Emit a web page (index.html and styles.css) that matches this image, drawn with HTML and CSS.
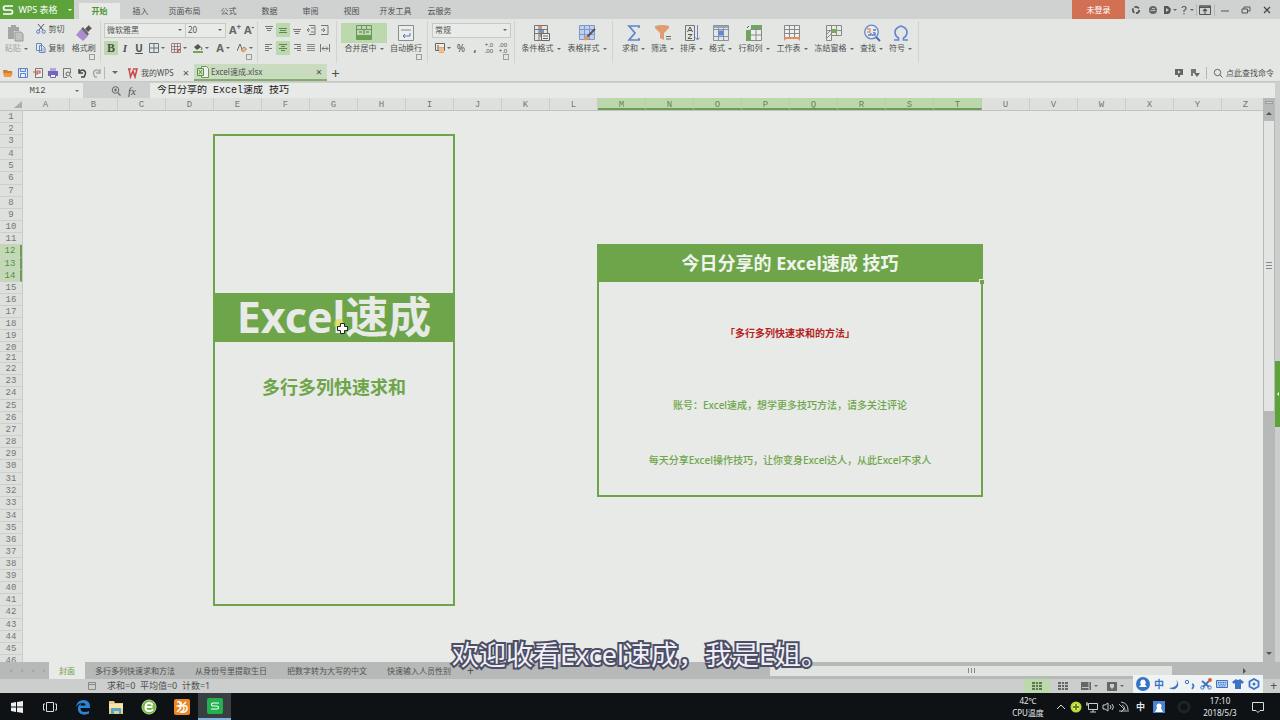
FILE: index.html
```html
<!DOCTYPE html>
<html lang="zh-CN">
<head>
<meta charset="utf-8">
<title>Excel速成.xlsx - WPS 表格</title>
<link rel="stylesheet" href="styles.css">
</head>
<body>
<header class="titlebar">
  <button class="brand"><svg class="i12" viewBox="0 0 12 12"><path d="M11 2H3.5Q1.5 2 1.5 4T3.500 6H8.500Q10.500 6 10.500 8T8.500 10H1" fill="none" stroke="#fff" stroke-width="1.700"/></svg><span>WPS 表格</span><i class="caret light"></i></button>
  <nav class="menus">
    <button class="menu active">开始</button><button class="menu">插入</button><button class="menu wide">页面布局</button><button class="menu">公式</button><button class="menu">数据</button><button class="menu">审阅</button><button class="menu">视图</button><button class="menu wide">开发工具</button><button class="menu">云服务</button>
  </nav>
  <button class="login">未登录</button>
  <div class="win">
    <button aria-label="皮肤"><svg class="i10" viewBox="0 0 10 10"><circle cx="5" cy="5" r="3.200" fill="none" stroke="#555" stroke-width="1.800" stroke-dasharray="5 1.500"/></svg></button>
    <button aria-label="云"><svg class="i10" viewBox="0 0 10 10"><circle cx="5" cy="5" r="4" fill="#666"/><path d="M2.500 5.500h5M4 3.500h3" stroke="#bbb"/></svg></button>
    <button aria-label="文档"><svg class="i10" viewBox="0 0 10 10"><path d="M2 1h4l3 3-1 4-2 1H2z" fill="#555"/><path d="M4 3v4l3-2z" fill="#ccc"/></svg><i class="caret"></i></button>
    <button aria-label="帮助"><svg class="i10" viewBox="0 0 10 10"><path d="M3 3Q3 1.500 5 1.500T7 3.500Q7 4.500 5 5.500V7M5 8v1.300" fill="none" stroke="#555" stroke-width="1.200"/></svg><i class="caret"></i></button>
    <i class="vr"></i>
    <button aria-label="功能区"><svg class="i12" viewBox="0 0 12 12"><path d="M.5 2h11v8.500H.5z" fill="none" stroke="#555"/><path d="M1 2h10v1.500H1zM6 10V5M4 7l2-2 2 2" fill="none" stroke="#555" stroke-width="1.200"/></svg></button>
    <i class="vr"></i>
    <button class="ctl" aria-label="最小化"><svg class="i10" viewBox="0 0 10 10"><path d="M1 6h8" stroke="#555"/></svg></button>
    <button class="ctl" aria-label="还原"><svg class="i10" viewBox="0 0 10 10"><path d="M1 4h5.500v4H1zM3 4V2h6v4H6.500" fill="none" stroke="#555"/></svg></button>
    <button class="ctl" aria-label="关闭"><svg class="i10" viewBox="0 0 10 10"><path d="M2 2l6 6M8 2L2 8" stroke="#444" stroke-width="1.200"/></svg></button>
  </div>
</header>

<section class="ribbon">
  <div class="group clip more-opts">
    <button class="big off"><svg class="i18" viewBox="0 0 18 18"><path d="M1 3h3V1h5v2h3v4H7v8H1z" fill="#a3a6a4"/><path d="M8 8h6l2 2v7H8z" fill="#bfc2c0" stroke="#999"/></svg><span>粘贴<i class="caret"></i></span></button>
    <div class="pair">
      <button class="line"><svg class="i10" viewBox="0 0 10 10"><path d="M2 0l5 6M8 0L3 6" stroke="#555"/><circle cx="2.200" cy="7.700" r="1.600" fill="none" stroke="#5a78c8"/><circle cx="7.700" cy="7.700" r="1.600" fill="none" stroke="#5a78c8"/></svg><span>剪切</span></button>
      <button class="line"><svg class="i10" viewBox="0 0 10 10"><path d="M.5.5h5v7h-5zM3.500 2.500h3l2.500 2.500v4.500H3.500z" fill="#e6e9f0" stroke="#6d86b8"/><path d="M5 6h3M5 8h3" stroke="#6d86b8" stroke-width=".7"/></svg><span>复制</span></button>
    </div>
    <button class="big"><svg class="i18" viewBox="0 0 18 18"><path d="M10 5l4-4 1 2 2 1-4 4z" fill="#555"/><path d="M8 3l6 7-2 2-6-7z" fill="#666"/><path d="M6 5l7 7-5 5-7-6z" fill="#ab8cd0"/></svg><span>格式刷</span></button>
  </div>
  <div class="group font more-opts">
    <div class="row top">
      <label class="sel name"><select aria-label="字体"><option>微软雅黑</option></select><i class="caret"></i></label><label class="sel size"><select aria-label="字号"><option>20</option></select><i class="caret"></i></label>
      <button class="tool letter" aria-label="增大字号">A<sup>+</sup></button><button class="tool letter" aria-label="减小字号">A<sup>-</sup></button>
    </div>
    <div class="row">
      <button class="tool on bold">B</button><button class="tool ital">I</button><button class="tool under">U</button>
      <button class="tool drop" aria-label="边框"><svg class="i10" viewBox="0 0 10 10"><path d="M.5.5h9v9h-9zM5 .5v9M.5 5h9" fill="none" stroke="#667086"/></svg><i class="caret"></i></button>
      <button class="tool drop" aria-label="绘制边框"><svg class="i10" viewBox="0 0 10 10"><path d="M.5.5h9v9h-9zM3.500.5v9M6.500.5v9M.5 3.500h9M.5 6.500h9" fill="none" stroke="#8a6f6a" stroke-width=".8"/><path d="M6 9l3-3" stroke="#b55" stroke-width="1.500"/></svg><i class="caret"></i></button>
      <button class="tool drop" aria-label="填充颜色"><svg class="i10" viewBox="0 0 10 10"><path d="M1 4l4-3 3 3-4 3z" fill="#555"/><path d="M8 4q2 2 0 3" fill="none" stroke="#555"/><path d="M0 8h10v2H0z" fill="#70a84b"/></svg><i class="caret"></i></button>
      <button class="tool drop letter">A<i class="caret"></i></button>
      <button class="tool drop" aria-label="清除"><svg class="i10" viewBox="0 0 10 10"><path d="M0 8l3-7 2 5" fill="none" stroke="#666"/><path d="M4 7l3-3 2.500 2-3 3z" fill="#efb98c" stroke="#b98055"/></svg><i class="caret"></i></button>
    </div>
  </div>
  <div class="group align">
    <div class="row top"><button class="tool" aria-label="顶端对齐"><svg class="i10" viewBox="0 0 10 10"><path d="M1 1.500h8M2 3.500h6M3 5.500h4" stroke="#777"/></svg></button><button class="tool on" aria-label="垂直居中"><svg class="i10" viewBox="0 0 10 10"><path d="M1 3.500h8M2 5.500h6M1 7.500h8" stroke="#66805c"/></svg></button><button class="tool" aria-label="底端对齐"><svg class="i10" viewBox="0 0 10 10"><path d="M1 4.500h8M2 6.500h6M3 8.500h4" stroke="#777"/></svg></button><button class="tool" aria-label="减少缩进"><svg class="i10" viewBox="0 0 10 10"><path d="M3 .5h6v9H3M4 5H1M3 3L1 5l2 2M5 3h3M5 7h3" fill="none" stroke="#777"/></svg></button><button class="tool" aria-label="增加缩进"><svg class="i10" viewBox="0 0 10 10"><path d="M1 .5h7v9H1M1 5h4M3 3l2 2-2 2" fill="none" stroke="#777"/></svg></button></div>
    <div class="row"><button class="tool" aria-label="左对齐"><svg class="i10" viewBox="0 0 10 10"><path d="M1 1.500h7M1 3.500h4M1 5.500h7M1 7.500h4" stroke="#777"/></svg></button><button class="tool on" aria-label="居中"><svg class="i10" viewBox="0 0 10 10"><path d="M1 1.500h8M3 3.500h4M1 5.500h8M3 7.500h4" stroke="#66805c"/></svg></button><button class="tool" aria-label="右对齐"><svg class="i10" viewBox="0 0 10 10"><path d="M2 1.500h7M5 3.500h4M2 5.500h7M5 7.500h4" stroke="#777"/></svg></button><button class="tool" aria-label="两端对齐"><svg class="i10" viewBox="0 0 10 10"><path d="M1 1.500h8M1 3.500h8M1 5.500h8M1 7.500h8" stroke="#888"/></svg></button><button class="tool" aria-label="分散对齐"><svg class="i10" viewBox="0 0 10 10"><path d="M.5 1v8M9.500 1v8M2 5.500h6M4 3.500L2 5.500l2 2M6 3.500l2 2-2 2" fill="none" stroke="#777"/></svg></button></div>
  </div>
  <div class="group merge more-opts">
    <button class="big w4 lit"><svg class="i18" viewBox="0 0 18 18"><path d="M1.500 1.500h15v14h-15zM1.500 5.500h15M6.500 1.500v4M11.500 1.500v4" fill="none" stroke="#71906a"/><path d="M1.500 11h15v5h-15z" fill="#6a9f53"/><path d="M4 8h3M14 8h-3M9 6v4" stroke="#55774b"/></svg><span>合并居中<i class="caret"></i></span></button>
    <button class="big w3"><svg class="i18" viewBox="0 0 18 18"><path d="M1.500 1.500h15v15h-15z" fill="#eceeed" stroke="#8a8d8b"/><path d="M4 6h10" stroke="#888"/><path d="M13 9v3H6M8 10l-2 2 2 2" fill="none" stroke="#5877bd"/></svg><span>自动换行</span></button>
  </div>
  <div class="group num more-opts">
    <div class="row top"><label class="sel fmt"><select aria-label="数字格式"><option>常规</option></select><i class="caret"></i></label></div>
    <div class="row"><button class="tool drop" aria-label="货币"><svg class="i10" viewBox="0 0 10 10"><path d="M.5.5h9v7h-9z" fill="#eee" stroke="#666"/><path d="M3 2v5" stroke="#555"/><path d="M4 4h5v6H4z" fill="#e9a65f"/><path d="M4 6h5M4 8h5" stroke="#fff" stroke-width=".6"/></svg><i class="caret"></i></button><button class="tool">%</button><button class="tool comma">,</button><button class="tool dec"><span>+.0</span><span>.00</span></button><button class="tool dec"><span>.00</span><span>+.0</span></button></div>
  </div>
  <div class="group styles">
    <button class="big w4"><svg class="i18" viewBox="0 0 18 18"><path d="M2.500 1.500h13v15h-13zM2.500 5.500h13M2.500 9.500h13M7 1.500v15" fill="none" stroke="#777"/><path d="M7 2h3v3H7zM7 10h3v3H7z" fill="#d98d6b"/><path d="M7 6h5v3H7z" fill="#7a93c9"/><path d="M9.500 9.500h8v7h-8z" fill="#eee" stroke="#666"/><path d="M11 12h5M11 14.500h5" stroke="#666"/></svg><span>条件格式<i class="caret"></i></span></button>
    <button class="big w4"><svg class="i18" viewBox="0 0 18 18"><path d="M1.500 1.500h15v14h-15z" fill="#c1d0ed" stroke="#7e97cf"/><path d="M1.500 5.500h15M1.500 10.500h15M6.500 1.500v14M11.500 1.500v14" stroke="#7e97cf"/><path d="M9 13l8-8" stroke="#555" stroke-width="2"/><path d="M6 16q0-4 3-4l2 2q-1 3-5 2" fill="#e29a5b"/></svg><span>表格样式<i class="caret"></i></span></button>
  </div>
  <div class="group edit">
    <button class="big w2"><svg class="i18" viewBox="0 0 18 18"><path d="M14 4V2H4l6 7-6 7h10v-2" fill="none" stroke="#5f84cc" stroke-width="1.700"/></svg><span>求和<i class="caret"></i></span></button>
    <button class="big w2"><svg class="i18" viewBox="0 0 18 18"><path d="M1 2q7-2 14 0v2l-5 5v7l-4-2V9L1 4z" fill="#df9c70"/><path d="M12 12.500h5M12 15h5" stroke="#666"/></svg><span>筛选<i class="caret"></i></span></button>
    <button class="big w2"><svg class="i18" viewBox="0 0 18 18"><path d="M2.500 1.500h9v15h-9z" fill="none" stroke="#777"/><path d="M4.500 8L7 3l2.500 5M5.500 6.500h3M5 10.500h4l-4 4h4" fill="none" stroke="#555"/><path d="M14.500 1v15M12.500 13.500l2 2.500 2-2.500" fill="none" stroke="#6c86c9"/></svg><span>排序<i class="caret"></i></span></button>
    <button class="big w2"><svg class="i18" viewBox="0 0 18 18"><path d="M1.500 1.500h15v15h-15zM1.500 5.500h15M1.500 12.500h15M6.500 1.500v15M11.500 1.500v15" fill="none" stroke="#8991a2"/><path d="M2 2h14v2H2z" fill="#9ba2b0"/><path d="M6.500 6.500h5v5h-5z" fill="#5f86dc"/></svg><span>格式<i class="caret"></i></span></button>
    <button class="big w3"><svg class="i18" viewBox="0 0 18 18"><path d="M5.500 5.500h11v11h-11zM5.500 11h11M11 5.500v11" fill="#eee" stroke="#888"/><path d="M6 1h11v4H6zM1 6h5v11H1z" fill="#70a461"/><path d="M2 4l2-2" stroke="#555"/></svg><span>行和列<i class="caret"></i></span></button>
    <button class="big w3"><svg class="i18" viewBox="0 0 18 18"><path d="M1.500 1.500h15v12h-15zM1.500 5.500h15M1.500 9.500h15M6.500 1.500v12M11.500 1.500v12" fill="#eee" stroke="#888"/><path d="M1 13h16v4l-2-2H3l-2 2z" fill="#dd8f62"/></svg><span>工作表<i class="caret"></i></span></button>
    <button class="big w4"><svg class="i18" viewBox="0 0 18 18"><path d="M1.500 1.500h15v10h-10v5h-5zM1.500 6.500h15M6.500 1.500v10M11.500 1.500v10" fill="#e8eae8" stroke="#888"/><path d="M7 5h5v4H7z" fill="#79a955"/><path d="M2 10l4-4M2 14l4-4" stroke="#888"/></svg><span>冻结窗格<i class="caret"></i></span></button>
    <button class="big w2"><svg class="i18" viewBox="0 0 18 18"><circle cx="8.500" cy="8" r="6.800" fill="#e9ecf0" stroke="#6787c8" stroke-width="1.300"/><path d="M13 13l4 4" stroke="#4c70b8" stroke-width="2"/><path d="M4 5h3v3H4" fill="none" stroke="#dd9459" stroke-width="1.300"/><path d="M5 11h3V9M10 6h3M10 9q3-1 2 2H9" fill="none" stroke="#5879c0" stroke-width="1.300"/></svg><span>查找<i class="caret"></i></span></button>
    <button class="big w2"><svg class="i18" viewBox="0 0 18 18"><path d="M2 16h4.500v-2Q3 12 3 8t6-6q6 2 6 6t-3.500 6v2H16" fill="none" stroke="#6485cf" stroke-width="1.700"/></svg><span>符号<i class="caret"></i></span></button>
  </div>
</section>

<section class="docbar">
  <div class="quick">
    <button aria-label="打开"><svg class="i10" viewBox="0 0 10 10"><path d="M0 2h4l1 1h4v2H2L1 9z" fill="#cf7a2f"/><path d="M2 5h8L8 9H1z" fill="#ee9a45"/></svg></button>
    <button aria-label="保存"><svg class="i10" viewBox="0 0 10 10"><path d="M.5.5h9v9h-9zM2.500.5v3h5v-3M2.500 9.500v-4h5v4" fill="#e8eefa" stroke="#5c83cf"/></svg></button>
    <button aria-label="输出PDF"><svg class="i10" viewBox="0 0 10 10"><path d="M2.500.5h7v9h-7z" fill="#eee" stroke="#777"/><path d="M0 4h3M4 7V3h3v2H4" fill="none" stroke="#c65a50" stroke-width="1.200"/></svg></button>
    <button aria-label="打印"><svg class="i10" viewBox="0 0 10 10"><path d="M2 0h6v3H2z" fill="#b3a6d8"/><path d="M0 3h10v5H0z" fill="#7465b5"/><path d="M2.500 6.500h5v3h-5z" fill="#eee" stroke="#7465b5"/></svg></button>
    <button aria-label="打印预览"><svg class="i10" viewBox="0 0 10 10"><path d="M5 9.500H1.500v-9h7V5" fill="none" stroke="#777"/><circle cx="6" cy="6" r="2" fill="none" stroke="#666"/><path d="M7.500 7.500L10 10" stroke="#666"/></svg></button>
    <button aria-label="撤销"><svg class="i10" viewBox="0 0 10 10"><path d="M2 1v4h4M2 5Q4 1 7 2.500T7 9H4" fill="none" stroke="#444" stroke-width="1.500"/></svg></button>
    <button aria-label="恢复"><svg class="i10" viewBox="0 0 10 10"><path d="M8 1v4H4M8 5Q6 1 3 2.500T3 9h2" fill="none" stroke="#a5a8a6" stroke-width="1.500"/></svg></button>
    <i class="vr"></i>
    <button class="more" aria-label="更多"><i class="caret big-caret"></i></button>
  </div>
  <div class="doc"><svg class="i12" viewBox="0 0 12 12"><path d="M1 2h3M2 2l1.500 8L6 4l2 6 2-8H6" fill="none" stroke="#cd4948" stroke-width="1.500"/></svg><span>我的WPS</span><button class="x" aria-label="关闭标签">×</button></div>
  <div class="doc current"><svg class="i12" viewBox="0 0 12 12"><path d="M4.500.5h5l2 2v9h-7z" fill="#edf3ea" stroke="#6f9460"/><path d="M.5 2.500h6v7h-6zM2 4l3 4M5 4L2 8" fill="#cfe3c5" stroke="#5c8d4b"/></svg><span>Excel速成.xlsx</span><button class="x" aria-label="关闭标签">×</button></div>
  <button class="plus" aria-label="新建">+</button>
  <div class="find">
    <button aria-label="播放"><svg class="i10" viewBox="0 0 10 10"><path d="M1 1h8v6H6v2H4V7H1z" fill="#666"/><path d="M4 2.500v3L6.500 4z" fill="#eee"/></svg></button>
    <button aria-label="切换"><svg class="i10" viewBox="0 0 10 10"><path d="M1 1h5v4H3v3H1z" fill="#777"/><path d="M4 5h6L7 9z" fill="#666"/></svg></button>
    <i class="vr"></i>
    <svg class="i10" viewBox="0 0 10 10"><circle cx="4.500" cy="4.500" r="3.200" fill="none" stroke="#666"/><path d="M7 7l2.500 2.500" stroke="#666"/></svg><span>点此查找命令</span>
  </div>
</section>

<section class="formula">
  <label class="namebox"><input value="M12" aria-label="名称框"><i class="caret"></i></label>
  <div class="fx"><svg class="i10" viewBox="0 0 10 10"><circle cx="4.500" cy="4" r="3.300" fill="none" stroke="#666"/><path d="M3 4h3M4.500 2.500v3M7 7l2.500 2.500" stroke="#666" stroke-width="1.200"/></svg><em>fx</em></div>
  <input class="fbar" value="今日分享的 Excel速成 技巧" aria-label="编辑栏">
</section>

<main class="work">
  <div class="sheet">
    <div class="cols"><button class="corner" aria-label="全选"><svg class="i10" viewBox="0 0 10 10"><path d="M10 2v7H2z" fill="#a9acaa"/></svg></button><span>A</span><span>B</span><span>C</span><span>D</span><span>E</span><span>F</span><span>G</span><span>H</span><span>I</span><span>J</span><span>K</span><span>L</span><span class="s">M</span><span class="s">N</span><span class="s">O</span><span class="s">P</span><span class="s">Q</span><span class="s">R</span><span class="s">S</span><span class="s">T</span><span>U</span><span>V</span><span>W</span><span>X</span><span>Y</span><span>Z</span></div>
    <div class="body">
      <div class="rows"><span>1</span><span>2</span><span>3</span><span>4</span><span>5</span><span>6</span><span>7</span><span>8</span><span>9</span><span>10</span><span>11</span><span class="s">12</span><span class="s">13</span><span class="s">14</span><span>15</span><span>16</span><span>17</span><span>18</span><span>19</span><span>20</span><span>21</span><span>22</span><span>23</span><span>24</span><span>25</span><span>26</span><span>27</span><span>28</span><span>29</span><span>30</span><span>31</span><span>32</span><span>33</span><span>34</span><span>35</span><span>36</span><span>37</span><span>38</span><span>39</span><span>40</span><span>41</span><span>42</span><span>43</span><span>44</span><span>45</span><span>46</span></div>
      <div class="cells">
        <div class="frame cover"></div>
        <h1 class="banner">Excel速成<svg class="cursor" viewBox="0 0 16 16"><circle cx="5" cy="5" r="5" fill="#d7dc2c" opacity=".65"/><path d="M6.500 4.500h4v3h3v4h-3v3h-4v-3h-3v-4h3z" fill="#fff" stroke="#222"/></svg></h1>
        <h2 class="topic">多行多列快速求和</h2>
        <div class="frame card"></div>
        <h2 class="share">今日分享的 Excel速成 技巧<i class="handle"></i></h2>
        <p class="red">「多行多列快速求和的方法」</p>
        <p class="note one">账号：Excel速成，想学更多技巧方法，请多关注评论</p>
        <p class="note two">每天分享Excel操作技巧，让你变身Excel达人，从此Excel不求人</p>
      </div>
    </div>
  </div>
  <div class="vscroll"><div class="split"></div><i class="tri up"></i><div class="thumb"><i></i><i></i><i></i></div><i class="tri down"></i></div>
  <div class="edge"><button class="pull" aria-label="展开任务窗格"></button></div>
</main>

<section class="tabs">
  <div class="navs"><i></i><i></i><i></i><i></i></div>
  <button class="tab active">封面</button><button class="tab">多行多列快速求和方法</button><button class="tab">从身份号里提取生日</button><button class="tab">把数字转为大写的中文</button><button class="tab">快速输入人员性别</button><button class="tab add">+</button>
  <div class="hscroll"><div class="hthumb"><i></i><i></i><i></i></div><i class="tri right"></i></div>
</section>

<footer class="status">
  <svg class="i10" viewBox="0 0 10 10"><path d="M1.500 1.500h7v7h-7zM1.500 3.500h7" fill="none" stroke="#888"/></svg>
  <span class="sum">求和=0&nbsp; 平均值=0&nbsp; 计数=1</span>
  <div class="views">
    <button class="on" aria-label="普通视图"><svg class="i12" viewBox="0 0 12 12"><path d="M1 2h10v8H1z" fill="#5c7a50"/><path d="M1 4.500h10M1 7.500h10M4.500 2v8M7.500 2v8" stroke="#b5d0a7"/></svg></button>
    <button aria-label="分页预览"><svg class="i12" viewBox="0 0 12 12"><path d="M1 2h10v8H1z" fill="#666"/><path d="M1 4.500h10M1 7.500h10M4.500 2v8M7.500 2v8" stroke="#c4c6c5"/></svg></button>
    <button aria-label="阅读模式"><svg class="i12" viewBox="0 0 12 12"><path d="M1 2h10v8H1z" fill="#666"/><path d="M2 7.500h7V2M9 8v2" fill="none" stroke="#c4c6c5"/></svg><i class="caret"></i></button>
    <button aria-label="护眼模式"><svg class="i12" viewBox="0 0 12 12"><path d="M1 2h10v9H1z" fill="#666"/><path d="M4 4h4v3L6 9 4 7z" fill="#ccc"/></svg><i class="caret"></i></button>
  </div>
  <span class="zoom">+</span>
  <div class="ime">
    <svg class="i14" viewBox="0 0 14 14"><circle cx="7" cy="7" r="7" fill="#3574c7"/><path d="M7 2.500a3 3 0 0 1 2 5L11 10H3l2-2.500a3 3 0 0 1 2-5" fill="#fff"/></svg><b>中</b>
    <svg class="i12" viewBox="0 0 12 12"><path d="M8 1q4 8-7 9 3 2 6 1Q13 8 8 1" fill="#3b73c5"/></svg>
    <svg class="i12" viewBox="0 0 12 12"><circle cx="3" cy="4" r="1.700" fill="none" stroke="#3b73c5"/><path d="M8 6q3 1 0 5" fill="none" stroke="#3b73c5" stroke-width="1.800"/></svg>
    <svg class="i12" viewBox="0 0 12 12"><path d="M2 3l7 6M9 3L3 9" stroke="#3b73c5" stroke-width="1.800"/><circle cx="2.500" cy="9.500" r="1.700" fill="none" stroke="#3b73c5"/><circle cx="9.500" cy="9.500" r="1.700" fill="none" stroke="#3b73c5"/><circle cx="10" cy="2" r="2" fill="#e2573c"/></svg>
    <svg class="i12" viewBox="0 0 12 12"><path d="M.5 2.500h11v7H.5z" fill="#b9cef0" stroke="#3b73c5"/><path d="M2 4.500h8M2 6.200h8M3 8h6" stroke="#3b73c5" stroke-dasharray="1 .7"/></svg>
    <svg class="i12" viewBox="0 0 12 12"><path d="M4 1q2 2 4 0l4 3-2 2-1-1v6H3V5L2 6 0 4z" fill="#3b73c5"/></svg>
    <svg class="i12" viewBox="0 0 12 12"><path d="M6 1l4.500 2.500v5L6 11 1.500 8.500v-5z" fill="none" stroke="#3b73c5" stroke-width="1.800"/><circle cx="6" cy="6" r="1.500" fill="#3b73c5"/></svg>
  </div>
</footer>

<footer class="taskbar">
  <button class="app" aria-label="开始菜单"><svg class="i14" viewBox="0 0 14 14"><path d="M1 3l5-1v4.500H1zM7 2l6-1v5.500H7zM1 7.500h5V12l-5-1zM7 7.500h6V13l-6-1z" fill="#eee"/></svg></button>
  <button class="app" aria-label="任务视图"><svg class="i14" viewBox="0 0 14 14"><path d="M3.500 2.500h7v9h-7zM2 4H.5v6H2M12 4h1.500v6H12" fill="none" stroke="#ddd"/></svg></button>
  <button class="app" aria-label="Edge"><svg class="i16" viewBox="0 0 16 16"><path d="M1 8Q2 1 8.500 1T15 8v1H5.500q0 4 4 4 3 0 4.500-1v2.500q-3 1.500-6 1-6-1-5-7Q3.500 5.500 7 4 3.500 4 1 8M5.500 6.500h5Q10.500 4 8 4T5.500 6.500" fill="#2b83d5"/></svg></button>
  <button class="app" aria-label="文件资源管理器"><svg class="i16" viewBox="0 0 16 16"><path d="M1 2h5l1 2h8v11H1z" fill="#e9ce7d"/><path d="M1 5h14v5H1z" fill="#f7e6a8"/><path d="M3 9h10v6h-2v-3H6v3H3z" fill="#55a9cc"/></svg></button>
  <button class="app" aria-label="浏览器"><svg class="i16" viewBox="0 0 16 16"><circle cx="8" cy="8" r="7" fill="#70b840" stroke="#b8d99b"/><path d="M11.500 6.500Q11 4 8 4T4.500 8 8 12t3.500-2M4.500 8h7" fill="none" stroke="#fff" stroke-width="2"/></svg></button>
  <button class="app" aria-label="UC浏览器"><svg class="i16" viewBox="0 0 16 16"><rect width="16" height="16" rx="2" fill="#ee8622"/><path d="M3 3q5-1 4 3l-3 1q4 1 2 3l-3 3M12 3L8 7q6-1 5 3t-6 3q5-3 2-5M5 4h3" fill="none" stroke="#fff" stroke-width="1.500"/></svg></button>
  <button class="app open" aria-label="WPS表格"><svg class="i16" viewBox="0 0 16 16"><rect width="16" height="16" rx="2" fill="#22b14c"/><path d="M12 5H6Q4.500 5 4.500 6.500T6 8h4q1.500 0 1.500 1.500T10 11H4" fill="none" stroke="#fff" stroke-width="1.200"/></svg></button>
  <div class="temp"><span>42℃</span><span>CPU温度</span></div>
  <div class="tray">
    <svg class="i10" viewBox="0 0 10 10"><path d="M1 7l4-4 4 4" fill="none" stroke="#ddd"/></svg>
    <svg class="i12" viewBox="0 0 12 12"><circle cx="6" cy="6" r="5.500" fill="#b9d636"/><circle cx="6" cy="6" r="3.500" fill="#f4e94f"/><path d="M6 3v6M3 6h6" stroke="#468a36" stroke-width="1.800"/></svg>
    <svg class="i12" viewBox="0 0 12 12"><path d="M2.500 2.500h9v6h-9zM7 9v2M4 11h6M1 1v4M0 3h2" fill="none" stroke="#ccc"/></svg>
    <svg class="i12" viewBox="0 0 12 12"><path d="M1 4h2l3-2v8L3 8H1zM8 4q2 2 0 4M10 3q3 3 0 6" fill="none" stroke="#ccc"/></svg>
    <svg class="i12" viewBox="0 0 12 12"><path d="M1 3l5 5-3 3M1 10h10M3 1q7 1 7 8M4 4q3 1 3 5" fill="none" stroke="#bbb"/></svg>
    <b>中</b>
    <svg class="i12 user" viewBox="0 0 12 12"><path d="M0 0h12v12H0z" fill="#4c82d2"/><circle cx="6" cy="5" r="2.500" fill="#fff"/><path d="M2 11l2-4h4l2 4z" fill="#fff"/></svg>
    <svg class="i14 ring" viewBox="0 0 14 14"><circle cx="7" cy="7" r="5" fill="none" stroke="#1c2521" stroke-width="3"/></svg>
  </div>
  <div class="clock"><span>17:10</span><span>2018/5/3</span></div>
  <button class="notice" aria-label="通知"><svg class="i14" viewBox="0 0 14 14"><path d="M1.500 2.500h11v8H9l-2 2-2-2H1.500z" fill="none" stroke="#ddd"/></svg></button>
</footer>
<p class="subtitle">欢迎收看Excel速成，我是E姐。</p>
</body>
</html>
```

FILE: styles.css
```css
:root {
  --green: #6ea54a;
  --ink: #4e5150;
  --paper: #e8eae7;
  --ui: "Noto Sans", "Noto Sans CJK SC", sans-serif;
  --rows: repeat(2, 12px) 13px repeat(2, 12px) 13px repeat(5, 12px) 13px repeat(7, 12px) 10px 11px repeat(2, 12px) 13px repeat(5, 12px) 13px repeat(2, 12px) 13px repeat(8, 12px) 13px repeat(4, 12px);
}
* { box-sizing: border-box; }
body {
  margin: 0; height: 100vh; overflow: hidden; position: relative;
  display: flex; flex-direction: column;
  background: #e4e6e3; color: var(--ink);
  font: 8px/12px var(--ui);
}
button, input, select { font: inherit; color: inherit; border: 0; background: none; padding: 0; margin: 0; border-radius: 0; appearance: none; }
button { display: flex; align-items: center; justify-content: center; white-space: nowrap; }
h1, h2, p { margin: 0; white-space: nowrap; }
svg { display: block; flex: none; }
.i10 { width: 10px; height: 10px; }
.i12 { width: 12px; height: 12px; }
.i14 { width: 14px; height: 14px; }
.i16 { width: 16px; height: 16px; }
.i18 { width: 18px; height: 18px; }
.caret { display: inline-block; flex: none; border: 2px solid transparent; border-top-color: #666; border-bottom: 0; margin-left: 3px; vertical-align: middle; }
.caret.light { border-top-color: #fff; }
.big-caret { border-width: 3px; border-bottom: 0; margin: 0; }
.vr { flex: none; width: 1px; height: 12px; background: #b5b8b6; }

.titlebar { flex: none; height: 19px; display: flex; background: #d0d2d1; }
.brand { width: 74px; background: #5da33c; color: #fff; font-size: 9px; gap: 4px; }
.brand .caret { margin-left: 6px; }
.menus { display: flex; flex: 1; padding-left: 5px; }
.menu { width: 41px; padding-top: 3px; }
.menu.wide { width: 47px; }
.menu.active { background: #e7e9e6; color: #4f9434; font-weight: bold; margin-top: 3px; padding-top: 0; }
.login { width: 53px; background: #d27054; color: #fff; }
.win { display: flex; align-items: center; width: 155px; padding: 0 2px; }
.win button { flex: 1 1 15px; }
.win .ctl { flex-basis: 19px; }
.win .caret { margin-left: 1px; }

.ribbon { flex: none; height: 45px; display: flex; }
.group { flex: none; display: flex; height: 42px; margin-top: 2px; border-right: 1px solid #d0d3d0; position: relative; }
.more-opts::after { content: ""; position: absolute; right: 5px; bottom: 3px; width: 4px; height: 4px; border: 1px solid #9b9e9c; }
.big { height: 32px; flex-direction: column; width: 33px; margin-top: 2px; }
.big .caret { margin-left: 3px; }
.big.w2 { width: 29px; }
.big.w3 { width: 38px; }
.big.w4 { width: 46px; }
.off { color: #a1a4a2; }
.lit { background: linear-gradient(#bcd9ad 20px, transparent 20px); }
.pair { width: 35px; display: flex; flex-direction: column; justify-content: space-between; padding: 1px 0 2px; height: 36px; }
.line { height: 14px; gap: 3px; }
.clip { width: 101px; }
.font, .align, .num { flex-direction: column; gap: 4px; padding-top: 2px; }
.font { width: 157px; padding-left: 3px; }
.align { width: 79px; padding-left: 4px; }
.merge { width: 91px; padding-left: 4px; }
.num { width: 87px; padding-left: 4px; }
.styles { width: 98px; padding-left: 3px; }
.edit { width: 306px; padding-left: 6px; }
.row { display: flex; align-items: center; height: 14px; }
.sel { display: flex; align-items: center; height: 15px; border: 1px solid #c6c9c6; background: #e9ebe8; padding: 0 3px 0 2px; }
.sel select { flex: 1; min-width: 0; }
.sel .caret { margin: 0; }
.name { width: 82px; }
.size { width: 40px; border-left: 0; margin-right: 2px; }
.fmt { width: 79px; }
.tool { width: 14px; height: 14px; font-size: 10px; }
.tool.drop { width: 22px; }
.tool .caret { margin-left: 2px; }
.on { background: #bcd9ad; }
.letter { font-size: 11px; font-weight: bold; color: #666; }
.letter sup { font-size: 8px; line-height: 8px; align-self: flex-start; }
.bold { font-family: "Liberation Serif", serif; font-weight: bold; font-size: 12px; }
.ital { font-family: "Liberation Serif", serif; font-style: italic; font-size: 11px; font-weight: bold; }
.under { text-decoration: underline; font-weight: bold; }
.comma { font-weight: bold; }
.dec { flex-direction: column; font-size: 6px; line-height: 6px; }

.docbar { flex: none; height: 18px; display: flex; align-items: stretch; border-bottom: 1px solid #c5c8c5; }
.quick { display: flex; align-items: center; width: 124px; padding-left: 1px; }
.quick button { width: 15px; }
.quick .more { width: 18px; margin-left: 1px; }
.doc { display: flex; align-items: center; width: 70px; padding: 0 5px 0 3px; gap: 2px; }
.doc span { flex: 1; white-space: nowrap; }
.doc.current { width: 133px; background: #c9dcbf; border-bottom: 2px solid #84ad6d; }
.x { font-size: 11px; }
.plus { font-size: 15px; width: 17px; }
.find { margin-left: auto; display: flex; align-items: center; gap: 6px; padding-right: 6px; }
.find span { margin-left: -3px; }

.formula { flex: none; height: 16px; display: flex; font-family: "Liberation Mono", "Noto Sans CJK SC", monospace; padding-top: 1px; padding-right: 5px; background: #cdd0ce; }
.namebox { width: 83px; display: flex; align-items: center; background: var(--paper); padding-right: 2px; }
.namebox input { width: 75px; text-align: center; font-size: 9px; }
.namebox .caret { margin-left: 0; }
.fx { width: 67px; display: flex; align-items: center; justify-content: flex-end; gap: 7px; padding-right: 14px; font-family: "Liberation Serif", serif; font-size: 11px; }
.fbar { flex: 1; min-width: 0; background: var(--paper); padding-left: 7px; font-size: 10px; color: #222; }

.work { flex: 1; min-height: 0; display: flex; background: var(--paper); }
.sheet { flex: 1; min-width: 0; overflow: hidden; display: flex; flex-direction: column; }
.cols, .rows { font-family: "Liberation Mono", monospace; font-size: 9px; color: #747775; background: #dde0dd; }
.cols { flex: none; display: flex; height: 13px; border-bottom: 1px solid #c0c3c0; line-height: 14px; }
.cols span { flex: none; width: 48px; text-align: center; border-right: 1px solid #c9ccc9; }
.cols .s { background: #bdd7ac; color: #5f894d; border-bottom: 2px solid #6c9d54; border-right-color: #b5cfa6; }
.corner { flex: none; width: 22px; justify-content: flex-end; }
.body { flex: 1; min-height: 0; display: flex; overflow: hidden; }
.rows, .cells { display: grid; grid-template-rows: var(--rows); align-content: start; }
.rows { flex: none; width: 23px; border-right: 1px solid #c8cbc8; }
.rows span { text-align: center; border-bottom: 1px solid #cccfcc; }
.rows .s { background: #c2dab4; color: #5f894d; border-right: 2px solid #6c9d54; }
.cells { flex: none; margin-left: -1px; grid-template-columns: repeat(26, 48px); color: var(--green); }
.frame { border: 2px solid var(--green); }
.cover { grid-area: 3 / 5 / 42 / 10; margin: -1px -1px 0 -1px; }
.banner { grid-area: 16 / 5 / 20 / 10; background: var(--green); color: var(--paper); font-size: 43px; line-height: 48px; text-align: center; position: relative; margin-top: -1px; }
.cursor { position: absolute; left: 120px; top: 26px; width: 16px; height: 16px; }
.topic { grid-area: 22 / 5 / 26 / 10; font-size: 18px; line-height: 48px; text-align: center; }
.card { grid-area: 12 / 13 / 33 / 21; margin: -1px -1px 0; }
.share { grid-area: 12 / 13 / 15 / 21; background: var(--green); color: #f0f4ee; font-size: 18px; line-height: 36px; text-align: center; position: relative; }
.handle { position: absolute; right: -2px; bottom: -2px; width: 5px; height: 5px; background: var(--green); border: 1px solid var(--paper); border-width: 1px 0 0 1px; }
.red, .note { font-size: 10px; text-align: center; align-self: center; }
.red { grid-area: 15 / 13 / 23 / 21; color: #b51f24; font-weight: bold; padding-top: 8px; }
.note { font-weight: 500; }
.one { grid-area: 24 / 13 / 27 / 21; margin-top: -2px; }
.two { grid-area: 28 / 13 / 32 / 21; margin-top: -2px; }

.vscroll { flex: none; width: 12px; background: #b6b9b7; display: flex; flex-direction: column; align-items: center; padding: 3px 0 4px; }
.split { width: 8px; height: 3px; background: #cfd1d0; border: 1px solid #9a9d9b; }
.tri { flex: none; border: 3px solid transparent; }
.up { border-bottom-color: #555; margin: 5px 0 6px; }
.down { border-top-color: #555; margin-top: auto; }
.thumb { flex: 0 0 52%; width: 10px; background: #e2e5e2; display: flex; flex-direction: column; align-items: center; justify-content: center; gap: 2px; }
.thumb i { width: 6px; height: 1px; background: #888; }
.edge { flex: none; width: 5px; background: #cccecd; }
.pull { width: 5px; height: 66px; margin-top: 263px; background: #5da33c; }
.pull::before { content: ""; border: 2px solid transparent; border-right-color: #fff; border-left: 0; }

.tabs { flex: none; height: 17px; display: flex; background: #b6b9b7; }
.navs { width: 49px; display: flex; align-items: center; gap: 7px; padding-left: 8px; }
.navs i { border: 2px solid transparent; border-right-color: #9b9e9c; width: 4px; }
.tab { padding: 0 10px; margin: 0; }
.tab.active { background: var(--paper); color: #68a148; }
.tab.add { font-size: 12px; padding: 0 6px; }
.hscroll { width: 510px; margin-left: auto; padding-right: 31px; display: flex; align-items: center; }
.hthumb { flex: 0 1 402px; height: 10px; background: #e0e3e0; display: flex; justify-content: center; align-items: center; gap: 2px; }
.hthumb i { width: 1px; height: 5px; background: #888; }
.right { border-left-color: #555; margin-left: auto; }

.status { flex: none; height: 14px; display: flex; align-items: center; background: #cccecd; position: relative; padding-left: 87px; }
.sum { margin-left: 10px; font-size: 9px; white-space: nowrap; }
.views { display: flex; margin-left: auto; margin-right: 152px; }
.views button { width: 26px; height: 14px; }
.views .caret { margin-left: 2px; }
.zoom { position: absolute; right: 3px; font-size: 12px; }
.ime { position: absolute; right: 17px; bottom: 0; height: 18px; padding: 0 3px; display: flex; align-items: center; gap: 4px; background: #f0f3f4; color: #3b73c5; font-size: 10px; }

.taskbar { flex: none; height: 27px; display: flex; align-items: stretch; background: #0e1214; color: #e5e7e8; }
.app { width: 33px; }
.open { background: #393e43; border-bottom: 2px solid #82b3dc; }
.temp, .clock { display: flex; flex-direction: column; justify-content: center; text-align: center; white-space: nowrap; }
.temp { margin-left: auto; width: 48px; }
.tray { display: flex; align-items: center; gap: 4px; padding-left: 4px; width: 142px; font-size: 9px; }
.tray b { margin-left: 2px; }
.user { margin-left: 4px; }
.ring { margin-left: 8px; }
.clock { width: 52px; }
.notice { width: 34px; padding-right: 10px; }
.subtitle { position: absolute; left: 0; right: 0; bottom: 44px; text-align: center; font-size: 27px; line-height: 42px; color: #eef0fa; -webkit-text-stroke: 4px #4d4d63; paint-order: stroke fill; }
```
